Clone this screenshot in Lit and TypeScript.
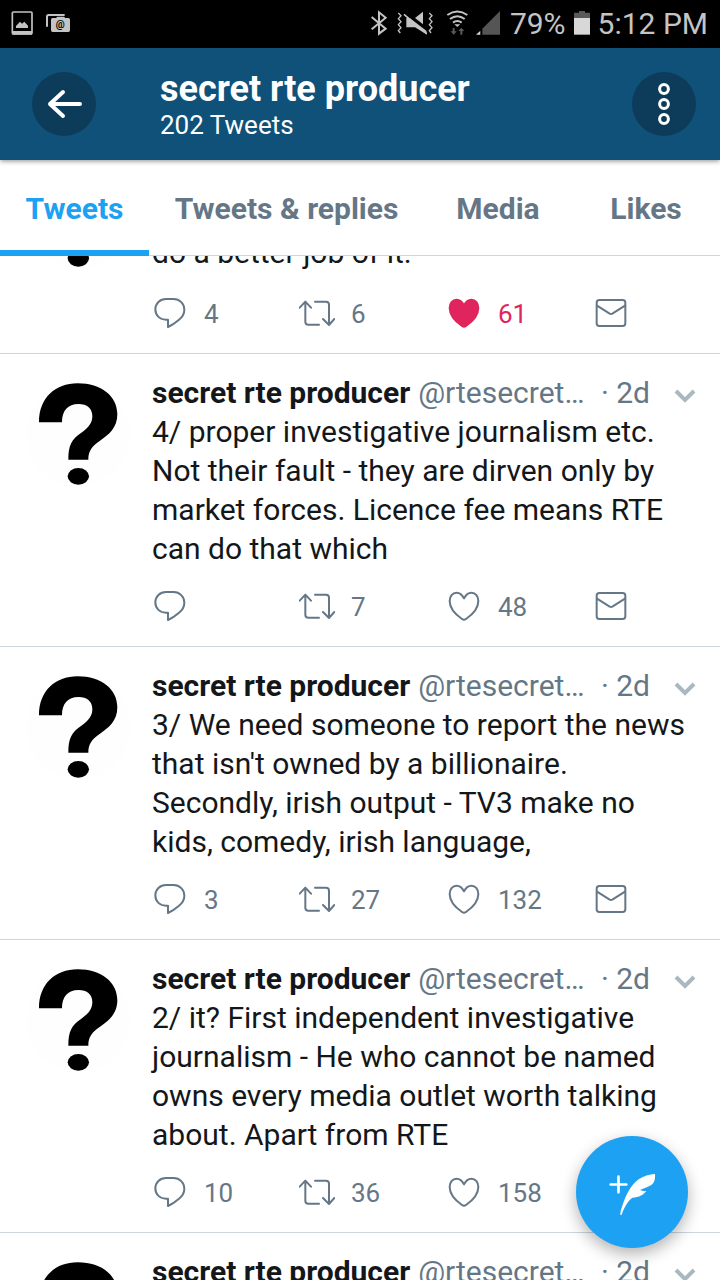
import { LitElement, html, css, svg, nothing } from "lit";
import { customElement, property, state, query } from "lit/decorators.js";
import { classMap } from "lit/directives/class-map.js";

interface Tweet {
  text: string;
  replies?: number;
  retweets?: number;
  likes?: number;
  liked?: boolean;
}

const AUTHOR = "secret rte producer";
const HANDLE = "@rtesecret…";

const TWEETS: Tweet[] = [
  { text: "\ndo a better job of it.", replies: 4, retweets: 6, likes: 61, liked: true },
  {
    text: "4/ proper investigative journalism etc. Not their fault - they are dirven only by market forces. Licence fee means RTE can do that which",
    retweets: 7,
    likes: 48,
  },
  {
    text: "3/ We need someone to report the news that isn't owned by a billionaire. Secondly, irish output - TV3 make no kids, comedy, irish language,",
    replies: 3,
    retweets: 27,
    likes: 132,
  },
  {
    text: "2/ it? First independent investigative journalism - He who cannot be named owns every media outlet worth talking about. Apart from RTE",
    replies: 10,
    retweets: 36,
    likes: 158,
  },
  { text: "" },
];

const TABS = ["Tweets", "Tweets & replies", "Media", "Likes"];

@customElement("status-bar")
class StatusBar extends LitElement {
  static styles = css`
    :host {
      display: flex;
      align-items: center;
      gap: 8px;
      height: 48px;
      padding: 0 12px 0 10px;
      background: #000;
      color: #c4c4c4;
      font-size: 30px;
      line-height: 48px;
      white-space: nowrap;
    }
    svg {
      display: block;
      height: 48px;
      flex: none;
    }
    .spacer {
      flex: 1;
    }
    .w16 { width: 16px; }
    .w18 { width: 18px; }
    .w24 { width: 24px; }
    .w26 { width: 26px; }
    .w29 { width: 29px; }
    .w38 { width: 38px; }
    .at {
      font: bold 30px Roboto, sans-serif;
      fill: #000;
    }
  `;

  render() {
    return html`
      <svg class="w24" viewBox="30 0 72 144" aria-hidden="true">
        <rect x="37" y="36" width="59" height="66" rx="3" fill="none" stroke="#c4c4c4" stroke-width="5" />
        <path d="M37 93H96V104H37Z" fill="#c4c4c4" />
        <path d="M48 84V78L60 65L66 71L73 65L84 77V84Z" fill="#c4c4c4" />
      </svg>
      <svg class="w29" viewBox="126 0 87 144" aria-hidden="true">
        <path d="M141 80V50Q141 45 146 45H194" fill="none" stroke="#c4c4c4" stroke-width="6" />
        <path d="M158 54H168L172 50H192L196 54H205Q210 54 210 59V91Q210 96 205 96H158Q153 96 153 91V59Q153 54 158 54Z" fill="#c4c4c4" />
        <text class="at" x="181" y="84" text-anchor="middle">@</text>
      </svg>
      <span class="spacer"></span>
      <svg class="w18" viewBox="31 0 54 144" aria-label="Bluetooth">
        <path d="M36 51L78 86L58 101V37L78 53L36 88" fill="none" stroke="#c4c4c4" stroke-width="6" />
      </svg>
      <svg class="w38" viewBox="107 0 114 144" aria-label="Vibrate">
        <path d="M114 39l8 8l-8 9l8 9l-8 9l8 9l-8 9l6 7M207 39l8 8l-8 9l8 9l-8 9l8 9l-8 9l5 7" fill="none" stroke="#c4c4c4" stroke-width="4" />
        <path d="M138 54H148L198 92L200 104L164 82H138ZM164 54L188 35V73Z" fill="#c4c4c4" />
        <path d="M131 43L199 101" stroke="#c4c4c4" stroke-width="5" />
      </svg>
      <svg class="w26" viewBox="246 0 78 144" aria-label="Wi-Fi">
        <path d="M262 45Q292 24 322 45M270 57Q292 40 314 57M279 68Q292 58 305 68" fill="none" stroke="#c4c4c4" stroke-width="6" />
        <path d="M283 73H301L292 81Z" fill="#c4c4c4" />
        <path d="M278 84H284V94H290L281 104L272 94H278ZM301 104H307V93H313L304 83L295 93H301Z" fill="#5a5a5a" />
      </svg>
      <svg class="w26" viewBox="348 0 78 144" aria-label="Signal">
        <path d="M420 33V104H367V86Z" fill="#555" />
        <path d="M361 92V104H348Z" fill="#d8d8d8" />
      </svg>
      <span>79%</span>
      <svg class="w16" viewBox="636 0 48 144" aria-label="Battery">
        <path d="M651 33H669V38H684V54H636V38H651Z" fill="#5a5a5a" />
        <path d="M636 54H684V104H636Z" fill="#d8d8d8" />
      </svg>
      <span>5:12 PM</span>
    `;
  }
}

const replyIcon = svg`<svg viewBox="36 54 108 108" aria-hidden="true"><path d="M78 66H101C119 66 133 80 133 98C133 111 127 120 117 128Q102 141 84 150V128H78C60 128 46 116 46 97C46 79 60 66 78 66Z" /></svg>`;
const retweetIcon = svg`<svg viewBox="477 54 108 108" aria-hidden="true"><path d="M496 75V134Q496 143 505 143H537M479 92L496 74L513 92M525 74H558Q567 74 567 83V143M549 126L567 144L583 126" /></svg>`;
const heartIcon = svg`<svg viewBox="918 54 108 108" aria-hidden="true"><path d="M972 85C966 73 958 68 950 68C937 68 929 79 929 93C929 118 953 138 966 147Q972 151 978 147C991 138 1015 118 1015 93C1015 79 1007 68 994 68C986 68 978 73 972 85Z" /></svg>`;
const mailIcon = svg`<svg viewBox="1359 54 108 108" aria-hidden="true"><rect x="1370" y="69" width="86" height="78" rx="8" /><path d="M1371 86L1409 110Q1413 112 1417 110L1455 86" /></svg>`;

@customElement("tweet-item")
class TweetItem extends LitElement {
  @property({ attribute: false }) tweet!: Tweet;

  static styles = css`
    :host {
      display: grid;
      grid-template-columns: 104px minmax(0, 1fr);
      column-gap: 22px;
      padding: 19px 24px 0 26px;
      border-bottom: 1px solid #ccd6dd;
      color: #14171a;
      font-size: 30px;
      line-height: 39px;
    }
    .avatar {
      display: block;
      width: 104px;
      height: 104px;
      margin-top: 9px;
      border-radius: 50%;
      background: #fefefe;
    }
    .content {
      min-height: 120px;
    }
    .head {
      display: flex;
      align-items: center;
      white-space: nowrap;
    }
    .name {
      margin: 0;
      font-size: 30px;
      font-weight: 700;
    }
    .handle {
      flex: 1;
      min-width: 0;
      margin-left: 8px;
      overflow: hidden;
      text-overflow: ellipsis;
      color: #657786;
    }
    .time {
      color: #657786;
    }
    .text {
      margin: 0;
      white-space: pre-line;
    }
    button {
      display: flex;
      align-items: center;
      padding: 0;
      border: 0;
      background: none;
      color: #657786;
      font: 26px/32px Roboto, sans-serif;
    }
    .more {
      margin-left: 24px;
    }
    .more svg {
      display: block;
      width: 22px;
      height: 32px;
      fill: none;
      stroke: #aab8c2;
      stroke-width: 4;
    }
    .actions {
      grid-column: 2;
      display: grid;
      grid-template-columns: repeat(3, 1fr) 36px;
      align-items: center;
      height: 78px;
      padding-right: 67px;
    }
    .actions button {
      gap: 16px;
    }
    .actions svg {
      width: 36px;
      height: 36px;
      margin-bottom: 2px;
      fill: none;
      stroke: currentColor;
      stroke-width: 6;
      stroke-linecap: round;
      stroke-linejoin: round;
    }
    .actions .liked {
      color: #e0245e;
    }
    .liked svg {
      fill: currentColor;
    }
  `;

  render() {
    const t = this.tweet;
    return html`
      <svg class="avatar" viewBox="78 66 312 312" role="img" aria-label="Avatar">
        <path d="M117 187C117 114 165 70 233 70C304 70 352 108 352 163C352 203 327 224 300 242C276 258 265 272 265 299H205C205 256 214 238 244 218C267 202 277 188 277 168C277 146 262 132 235 132C204 132 186 151 186 187Z" />
        <ellipse cx="235" cy="349" rx="32" ry="25" />
      </svg>
      <div class="content">
        <div class="head">
          <h2 class="name">${AUTHOR}</h2>
          <span class="handle">${HANDLE}</span>
          <span class="time">· 2d</span>
          <button class="more" aria-label="More">
            <svg viewBox="0 0 22 32"><path d="M2 14L11 23L20 14" /></svg>
          </button>
        </div>
        <p class="text">${t.text}</p>
      </div>
      <div class="actions">
        <button aria-label="Reply">${replyIcon}${t.replies ?? nothing}</button>
        <button aria-label="Retweet">${retweetIcon}${t.retweets ?? nothing}</button>
        <button class=${classMap({ liked: !!t.liked })} aria-label="Like">${heartIcon}${t.likes ?? nothing}</button>
        <button aria-label="Message">${mailIcon}</button>
      </div>
    `;
  }
}

@customElement("app-root")
class AppRoot extends LitElement {
  @state() private active = 0;
  @query(".feed") private feed!: HTMLElement;

  static styles = css`
    :host {
      display: flex;
      flex-direction: column;
      position: relative;
      height: 100vh;
      overflow: hidden;
      background: #fff;
      font-family: Roboto, sans-serif;
    }
    button {
      padding: 0;
      border: 0;
      font-family: inherit;
    }
    .bar {
      display: flex;
      align-items: center;
      flex: none;
      height: 112px;
      padding: 0 24px 0 32px;
      background: #10517a;
      color: #fff;
      box-shadow: 0 1px 5px rgba(0, 0, 0, 0.45);
      z-index: 1;
    }
    .round {
      flex: none;
      width: 64px;
      height: 64px;
      border-radius: 50%;
      background: #0c3c5a;
    }
    .round svg {
      display: block;
      width: 64px;
      height: 64px;
      fill: none;
      stroke: #fff;
      stroke-linecap: round;
    }
    .heading {
      flex: 1;
      min-width: 0;
      margin-left: 64px;
      padding-top: 2px;
    }
    .title {
      margin: 0;
      font-size: 36px;
      line-height: 40px;
      font-weight: 700;
    }
    .count {
      margin: 0;
      font-size: 26px;
      line-height: 32px;
    }
    .tabs {
      display: flex;
      flex: none;
      height: 95px;
      border-bottom: 1px solid #ccd6dd;
    }
    .tab {
      flex: 1 0 auto;
      min-width: 148px;
      margin-bottom: -1px;
      padding: 8px 25px 0;
      border-bottom: 6px solid transparent;
      background: none;
      color: #657786;
      font-size: 30px;
      line-height: 36px;
      font-weight: 700;
    }
    .tab.active {
      color: #1da1f2;
      border-bottom-color: #1da1f2;
    }
    .feed {
      flex: 1;
      min-height: 0;
      overflow-y: auto;
      scrollbar-width: none;
    }
    .compose {
      position: absolute;
      right: 32px;
      bottom: 32px;
      display: grid;
      place-items: center;
      width: 112px;
      height: 112px;
      border-radius: 50%;
      background: #1da1f2;
      box-shadow: 0 6px 16px rgba(0, 0, 0, 0.3);
    }
    .compose svg {
      width: 56px;
      height: 56px;
    }
  `;

  async firstUpdated() {
    await Promise.all([...this.renderRoot.querySelectorAll<LitElement>("tweet-item")].map((t) => t.updateComplete));
    this.feed.scrollTop = 120;
  }

  render() {
    return html`
      <status-bar></status-bar>
      <header class="bar">
        <button class="round" aria-label="Back">
          <svg viewBox="0 0 64 64"><path d="M48 32H18M31 20L18 32L31 44" stroke-width="4" stroke-linejoin="round" /></svg>
        </button>
        <div class="heading">
          <h1 class="title">${AUTHOR}</h1>
          <p class="count">202 Tweets</p>
        </div>
        <button class="round" aria-label="Options">
          <svg viewBox="0 0 64 64" stroke-width="3"><circle cx="32" cy="17" r="4.4" /><circle cx="32" cy="32" r="4.4" /><circle cx="32" cy="47" r="4.4" /></svg>
        </button>
      </header>
      <nav class="tabs" role="tablist">
        ${TABS.map(
          (label, i) => html`<button
            role="tab"
            aria-selected=${i === this.active}
            class=${classMap({ tab: true, active: i === this.active })}
            @click=${() => (this.active = i)}
          >${label}</button>`
        )}
      </nav>
      <main class="feed">
        ${TWEETS.map((t) => html`<tweet-item .tweet=${t}></tweet-item>`)}
      </main>
      <button class="compose" aria-label="New Tweet">
        <svg viewBox="132 162 168 168">
          <path d="M152 223.500H199M175.500 200V247" stroke="#fff" stroke-width="8" stroke-linecap="round" />
          <path d="M181 315C180 308 183 298 187 287C198 255 211 227 236 208C250 198 268 193 285 192C286 206 284 217 275 224C265 231 252 234 240 240C246 243 252 244 259 243C251 254 238 262 217 263C202 274 192 294 185 314Z" fill="#fff" />
        </svg>
      </button>
    `;
  }
}
